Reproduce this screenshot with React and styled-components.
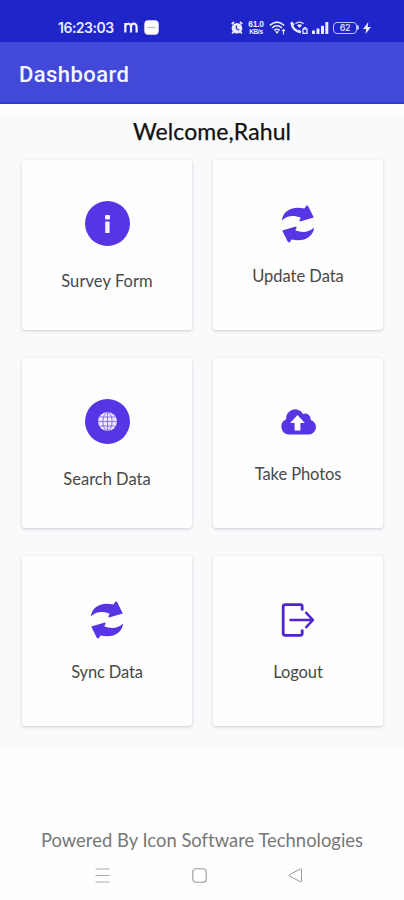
import React from "react";
import styled, { createGlobalStyle } from "styled-components";

const GlobalStyle = createGlobalStyle`
  * { box-sizing: border-box; }
  body { margin: 0; background: #fefefe; }
  svg { display: block; flex: none; }
`;

const accent = "#5734e4";

const Screen = styled.div`
  width: 404px;
  height: 900px;
  display: flex;
  flex-direction: column;
  overflow: hidden;
  font-family: Lato, "Liberation Sans", sans-serif;
  background: #fefefe;
`;

const StatusBar = styled.header`
  height: 42px;
  padding: 13px 33px 0 58px;
  display: flex;
  justify-content: space-between;
  background: #1f25c9;
  color: #e9ebff;
`;

const StatusGroup = styled.div`
  height: 29px;
  display: flex;
  align-items: center;
  align-self: flex-start;
  gap: ${(p) => p.$gap}px;
`;

const Clock = styled.span`
  width: 56px;
  margin-right: 4px;
  font: 600 14px/20px Inter, sans-serif;
  letter-spacing: -0.5px;
  white-space: nowrap;
`;

const Speed = styled.div`
  width: 18px;
  display: flex;
  flex-direction: column;
  align-items: center;
  font: 700 8.5px/8px "Liberation Sans", sans-serif;
  letter-spacing: -0.3px;
`;

const SpeedUnit = styled.span`
  font-size: 6.5px;
  line-height: 7px;
`;

const AppBar = styled.div`
  height: 62px;
  padding: 0 19px 1px;
  display: flex;
  align-items: center;
  background: #4249d8;
  border-bottom: 2px solid #3036cf;
  color: #f6f6ff;
`;

const Title = styled.h1`
  margin: 0;
  padding-top: 6px;
  font: 500 22px/28px Roboto, sans-serif;
  letter-spacing: 0.42px;
`;

const Content = styled.main`
  height: 633px;
  margin-top: 12px;
  background: #f9fafc;
`;

const Welcome = styled.h2`
  margin: 0;
  height: 44px;
  padding-left: 20px;
  text-align: center;
  color: #111;
  font-size: 23px;
  font-weight: 400;
  line-height: 30px;
  letter-spacing: 0.1px;
  -webkit-text-stroke: 0.25px #111;
`;

const Grid = styled.div`
  padding: 0 21px 0 22px;
  display: grid;
  grid-template-columns: 170px 170px;
  grid-auto-rows: 170px;
  gap: 28px 21px;
`;

const Card = styled.section`
  padding-top: 41px;
  display: flex;
  flex-direction: column;
  align-items: center;
  border-radius: 3px;
  background: #fefefe;
  box-shadow: 0 1px 3px rgba(60, 64, 70, 0.24);
`;

const IconSlot = styled.div`
  height: 45px;
  display: flex;
  align-items: center;
  justify-content: center;
`;

const Label = styled.span`
  margin-top: ${(p) => (p.$badge ? 25 : 20)}px;
  color: #484848;
  font-size: 16.5px;
  line-height: 20px;
  letter-spacing: ${(p) => p.$tracking}px;
  white-space: nowrap;
`;

const Footer = styled.footer`
  height: 80px;
  margin-top: auto;
  padding-top: 8px;
  color: #777;
  text-align: center;
  font-size: 18.4px;
  line-height: 24px;
  letter-spacing: 0.02px;
  white-space: nowrap;
`;

const NavBar = styled.nav`
  padding: 16px 101px 0 95px;
  display: flex;
  justify-content: space-between;
`;

const InfoIcon = () => (
  <svg width="45" height="45" viewBox="0 0 45 45">
    <circle cx="22.5" cy="22.5" r="22.5" fill={accent} />
    <rect x="20" y="14" width="5" height="4.5" rx="1" fill="#f6f0ff" />
    <rect x="20.2" y="20.5" width="4.4" height="11.5" rx="0.6" fill="#f6f0ff" />
  </svg>
);

const GlobeIcon = () => (
  <svg width="45" height="45" viewBox="0 0 45 45">
    <circle cx="22.5" cy="22.5" r="22.5" fill={accent} />
    <circle cx="22.5" cy="22.5" r="9.4" fill="#eee5ff" />
    <g fill="none" stroke="#8468e6" strokeWidth="0.9">
      <ellipse cx="22.5" cy="22.5" rx="4.6" ry="9.2" />
      <path d="M22.5 13.5v18M13.5 22.5h18M15 18h15M15 27h15" />
    </g>
  </svg>
);

const SyncIcon = () => (
  <svg width="34" height="38" viewBox="0 0 34 38" fill={accent}>
    <path d="M.8 15.5C2 6 11 .5 23.4 3.5L25.5.6Q27 .4 27.6 2L32.8 12.6 19 16.6Q18 15.8 18.6 14.8L19.8 12.8C13 10 6 10.5.8 15.5Z" />
    <path d="M33.2 22.5C32 32 23 37.5 10.6 34.5L8.5 37.4Q7 37.6 6.4 36L1.2 25.4 15 21.4Q16 22.2 15.4 23.2L14.2 25.2C21 28 28 27.5 33.2 22.5Z" />
  </svg>
);

const CloudIcon = () => (
  <svg width="35" height="26" viewBox="0 0 35 26">
    <path fill={accent} d="M8 25.5A8 8 0 0 1 5.2 10.2 9 9 0 0 1 22 4.9 5.6 5.6 0 0 1 29.6 11 7.4 7.4 0 0 1 28 25.5Z" />
    <path fill="#fefefe" d="m16.5 6 7.3 8h-4.4v7.5h-5.8V14H9.2Z" />
  </svg>
);

const LogoutIcon = () => (
  <svg width="34" height="34" viewBox="0 0 34 34" fill="none" stroke="#4d25cf" strokeWidth="2.8" strokeLinecap="butt" strokeLinejoin="round">
    <path d="M21.2 7.5V3.4Q21.2 1.7 19.5 1.7H4.2Q2.2 1.7 2.2 3.7V30.3Q2.2 32.3 4.2 32.3H19.5Q21.2 32.3 21.2 30.6V26.5" />
    <path d="M8.5 17H32M24.5 9.2 32 17 24.5 24.8" strokeWidth="2.5" />
  </svg>
);

const items = [
  { label: "Survey Form", icon: InfoIcon, badge: true, tracking: 0.08 },
  { label: "Update Data", icon: SyncIcon, tracking: -0.02 },
  { label: "Search Data", icon: GlobeIcon, badge: true, tracking: 0 },
  { label: "Take Photos", icon: CloudIcon, tracking: -0.08 },
  { label: "Sync Data", icon: SyncIcon, tracking: -0.15 },
  { label: "Logout", icon: LogoutIcon, tracking: -0.1 },
];

const AppBadge = () => (
  <svg width="15" height="15" viewBox="0 0 15 15">
    <rect x=".3" y=".3" width="14.4" height="14.4" rx="4" fill="#fff" />
    <path d="M3.5 7.5h8" stroke="#bbb" strokeWidth="1.2" />
  </svg>
);

const MIcon = () => (
  <svg width="14" height="11" viewBox="0 0 14 11" fill="none" stroke="#f2f3ff" strokeWidth="2.2">
    <path d="M1.3 10.5V1M1.3 5C1.3 1 7 .5 7 4.5V10.5M7 5C7 .8 12.6.5 12.6 4.8V10.5" />
  </svg>
);

const AlarmIcon = () => (
  <svg width="12" height="13" viewBox="0 0 12 13">
    <circle cx="6" cy="7.2" r="5.3" fill="#e9ebff" />
    <path d="M.8 3 3 1M11.2 3 9 1M2.5 10.5 1.2 12.4M9.5 10.5l1.3 1.9" stroke="#e9ebff" strokeWidth="1.7" />
    <path d="M5.4 4.5v3.2l2.8 1.4" fill="none" stroke="#3239c9" strokeWidth="1.2" />
  </svg>
);

const WifiIcon = () => (
  <svg width="17" height="14" viewBox="0 0 17 14" fill="none" stroke="#e9ebff" strokeWidth="1.6">
    <path d="M.8 4.4Q8-2.3 15.2 4.4M3 7Q8 2.5 13 7M5.2 9.4Q8 7.2 10.8 9.4" />
    <path d="M6 10.2h4L8 13Z" fill="#e9ebff" stroke="none" />
    <path d="M14.5 8.5v5M13 10l1.5-1.5L16 10" strokeWidth="1.1" />
  </svg>
);

const CallIcon = () => (
  <svg width="18" height="13" viewBox="0 0 18 13" fill="none" stroke="#e9ebff">
    <path d="M1.5 2Q2.5 9.5 10.6 11.2" strokeWidth="2.2" />
    <path d="M1.3 1.2 3.6 4.3M7.8 9.6l3 1.8" strokeWidth="2.4" />
    <path d="M5.5 2.8Q9.5-.5 13.5 2.8" strokeWidth="1.4" />
    <path d="M7 4.3Q9.5 2.3 12 4.3L9.5 7Z" fill="#e9ebff" stroke="none" />
    <rect x="13" y="8" width="4" height="4.4" strokeWidth="1.3" />
    <path d="M14 8V6.5h2V8" strokeWidth=".9" />
  </svg>
);

const SignalIcon = () => (
  <svg width="17" height="12" viewBox="0 0 17 12" fill="#e9ebff">
    <rect y="8.5" width="3" height="3.5" rx=".5" />
    <rect x="4.5" y="6.5" width="3" height="5.5" rx=".5" />
    <rect x="9" y="3.7" width="3" height="8.3" rx=".5" />
    <rect x="13.3" width="3" height="12" rx=".5" />
  </svg>
);

const Battery = styled.div`
  width: 24px;
  height: 12px;
  border: 1px solid #bfc3fa;
  border-radius: 4px;
  text-align: center;
  font: 500 9px/10px Inter, sans-serif;
  letter-spacing: -0.3px;
`;

const BatteryGroup = styled.div`
  display: flex;
  align-items: center;
`;

const BatteryTip = styled.span`
  width: 2px;
  height: 5px;
  border-radius: 0 2px 2px 0;
  background: #bfc3fa;
`;

const BoltIcon = () => (
  <svg width="8" height="12" viewBox="0 0 8 12" fill="#e9ebff">
    <path d="M5.3 0 0 7H3.2L2.5 12 8 5H4.7Z" />
  </svg>
);

const MenuNav = () => (
  <svg width="15" height="15" viewBox="0 0 15 15" stroke="#aaa" strokeWidth="1.1">
    <path d="M.5 1h14M.5 7.5h14M.5 14h14" />
  </svg>
);

const HomeNav = () => (
  <svg width="15" height="15" viewBox="0 0 15 15" fill="none" stroke="#999" strokeWidth="1.1">
    <rect x=".8" y=".8" width="13.4" height="13.4" rx="3" />
  </svg>
);

const BackNav = () => (
  <svg width="15" height="15" viewBox="0 0 15 15" fill="none" stroke="#999" strokeWidth="1" strokeLinejoin="round">
    <path d="M1.2 6.9 12.4.9Q13.5.5 13.5 1.7V13Q13.5 14.2 12.4 13.7L1.2 7.9Q.5 7.4 1.2 6.9Z" />
  </svg>
);

export default function App() {
  return (
    <>
      <GlobalStyle />
      <Screen>
        <StatusBar>
          <StatusGroup $gap={6}>
            <Clock>16:23:03</Clock>
            <MIcon />
            <AppBadge />
          </StatusGroup>
          <StatusGroup $gap={4}>
            <AlarmIcon />
            <Speed>
              <span>61.0</span>
              <SpeedUnit>KB/s</SpeedUnit>
            </Speed>
            <WifiIcon />
            <CallIcon />
            <SignalIcon />
            <BatteryGroup>
              <Battery>62</Battery>
              <BatteryTip />
            </BatteryGroup>
            <BoltIcon />
          </StatusGroup>
        </StatusBar>
        <AppBar>
          <Title>Dashboard</Title>
        </AppBar>
        <Content>
          <Welcome>Welcome,Rahul</Welcome>
          <Grid>
            {items.map(({ label, icon: Icon, badge, tracking }) => (
              <Card key={label}>
                <IconSlot>
                  <Icon />
                </IconSlot>
                <Label $badge={badge} $tracking={tracking}>{label}</Label>
              </Card>
            ))}
          </Grid>
        </Content>
        <Footer>
          Powered By Icon Software Technologies
          <NavBar>
            <MenuNav />
            <HomeNav />
            <BackNav />
          </NavBar>
        </Footer>
      </Screen>
    </>
  );
}
